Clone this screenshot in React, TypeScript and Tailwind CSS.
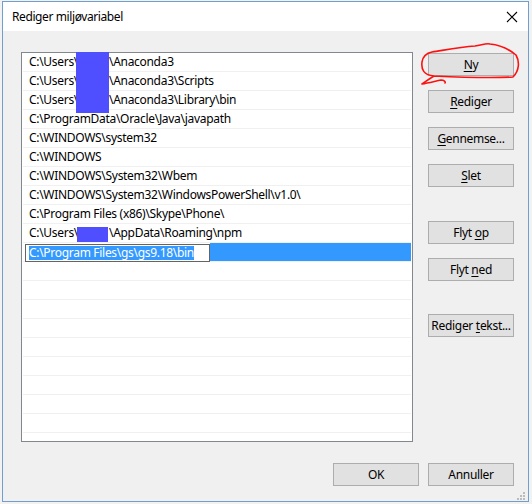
import React from "react";

const font = { fontFamily: '"Noto Sans", "Liberation Sans", sans-serif' };

type Row = { pre: string; post?: string };

const rows: Row[] = [
  { pre: "C:\\Users\\", post: "\\Anaconda3" },
  { pre: "C:\\Users\\", post: "\\Anaconda3\\Scripts" },
  { pre: "C:\\Users\\", post: "\\Anaconda3\\Library\\bin" },
  { pre: "C:\\ProgramData\\Oracle\\Java\\javapath" },
  { pre: "C:\\WINDOWS\\system32" },
  { pre: "C:\\WINDOWS" },
  { pre: "C:\\WINDOWS\\System32\\Wbem" },
  { pre: "C:\\WINDOWS\\System32\\WindowsPowerShell\\v1.0\\" },
  { pre: "C:\\Program Files (x86)\\Skype\\Phone\\" },
  { pre: "C:\\Users\\", post: "\\AppData\\Roaming\\npm" },
];

function Btn({ children, className = "" }: { children: React.ReactNode; className?: string }) {
  return (
    <div
      className={
        "flex h-[23px] w-[86px] items-center justify-center border border-[#adadad] bg-[#e1e1e1] text-[12px] leading-none text-black " +
        className
      }
    >
      {children}
    </div>
  );
}

function U({ children }: { children: React.ReactNode }) {
  return <span className="underline decoration-1 underline-offset-[2px]">{children}</span>;
}

export default function App() {
  return (
    <div className="relative h-[504px] w-[532px] overflow-hidden bg-[#f2f2f2] tracking-[-0.3px]" style={font}>
      <div className="ml-[2px] mt-[1px] flex h-[501px] w-[527px] flex-col border border-[#6f9fcf] bg-[#f0f0f0]">
        {/* title bar */}
        <div className="flex h-[29px] items-center justify-between bg-white pl-[9px] pr-[10px]">
          <span className="text-[12px] tracking-[-0.4px] text-black">Rediger miljøvariabel</span>
          <svg width="12" height="12" viewBox="0 0 12 12" className="mt-[1px]">
            <path d="M1 1 L11 11 M11 1 L1 11" stroke="#000" strokeWidth="1.1" fill="none" />
          </svg>
        </div>
        {/* body */}
        <div className="flex flex-1 flex-col pl-[18px] pr-[14px] pt-[21px]">
          <div className="flex">
            <div className="h-[390px] w-[392px] overflow-hidden border border-[#828790] bg-white">
              {Array.from({ length: 21 }).map((_, i) => {
                if (i === 10) {
                  return (
                    <div key={i} className="mx-[1px] flex h-[19px] border-b border-[#f0f0f0]">
                      <div className="ml-[2px] mt-[1px] flex h-[18px] w-[185px] items-center border border-[#646464] bg-white pl-[3px]">
                        <span className="bg-[#3399ff] text-[12px] leading-[14px] text-white">
                          C:\Program Files\gs\gs9.18\bin
                        </span>
                      </div>
                      <div className="h-[18px] flex-1 bg-[#3399ff]" />
                    </div>
                  );
                }
                const r = rows[i];
                return (
                  <div
                    key={i}
                    className="mx-[1px] flex h-[19px] items-center border-b border-[#f0f0f0] pl-[6px] text-[12px] leading-none whitespace-pre text-black"
                  >
                    {r ? (
                      r.post !== undefined ? (
                        <>
                          <span className="inline-block w-[80px]">{r.pre}</span>
                          <span>{r.post}</span>
                        </>
                      ) : (
                        r.pre
                      )
                    ) : null}
                  </div>
                );
              })}
            </div>
            <div className="ml-[15px] flex w-[86px] flex-col pt-[1px]">
              <Btn>
                <U>N</U>y
              </Btn>
              <Btn className="mt-[14px]">
                <U>R</U>ediger
              </Btn>
              <Btn className="mt-[14px]">
                <U>G</U>ennemse...
              </Btn>
              <Btn className="mt-[14px]">
                <U>S</U>let
              </Btn>
              <Btn className="mt-[34px]">
                Flyt&nbsp;<U>o</U>p
              </Btn>
              <Btn className="mt-[14px]">
                Flyt&nbsp;<U>n</U>ed
              </Btn>
              <Btn className="mt-[33px]">
                Rediger&nbsp;<U>t</U>ekst...
              </Btn>
            </div>
          </div>
          <div className="mt-[21px] flex justify-end gap-[9px]">
            <Btn>OK</Btn>
            <Btn>Annuller</Btn>
          </div>
        </div>
      </div>

      {/* redaction boxes */}
      <div className="absolute left-[76px] top-[52px] h-[61px] w-[33px] bg-[#4f4fff]" />
      <div className="absolute left-[77px] top-[227px] h-[15px] w-[31px] bg-[#4f4fff]" />

      {/* resize grip */}
      <svg className="absolute left-[516px] top-[491px]" width="10" height="10" viewBox="0 0 10 10">
        <rect x="7" y="1" width="2" height="2" fill="#bcbcbc" />
        <rect x="4" y="4" width="2" height="2" fill="#bcbcbc" />
        <rect x="7" y="4" width="2" height="2" fill="#bcbcbc" />
        <rect x="1" y="7" width="2" height="2" fill="#bcbcbc" />
        <rect x="4" y="7" width="2" height="2" fill="#bcbcbc" />
        <rect x="7" y="7" width="2" height="2" fill="#bcbcbc" />
      </svg>

      {/* red hand-drawn annotation */}
      <svg className="pointer-events-none absolute left-0 top-0" width="532" height="504" viewBox="0 0 532 504">
        <path
          d="M513 77 C 495 78, 455 77, 434 76 C 424 75, 421 70, 422 62 C 423 56, 427 53, 432 52 C 445 50, 460 47, 475 46 C 482 45, 486 43, 490 44 C 500 45, 510 50, 516 55 C 520 62, 519 71, 513 77 M 434 76 C 429 79, 425 82, 422 84 C 428 83, 436 81, 441 80 C 444 80, 446 82, 445 83"
          stroke="#ff1010"
          strokeWidth="1.6"
          fill="none"
          strokeLinecap="round"
          strokeLinejoin="round"
        />
      </svg>
    </div>
  );
}
